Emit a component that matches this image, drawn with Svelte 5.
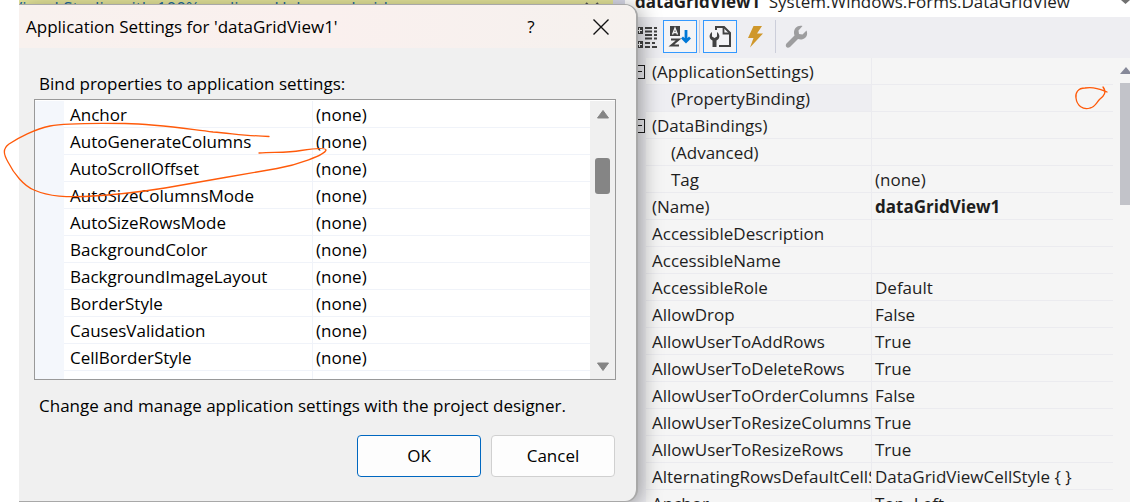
<script>
    let selected = "(PropertyBinding)";

    const bindings = [
        "Anchor",
        "AutoGenerateColumns",
        "AutoScrollOffset",
        "AutoSizeColumnsMode",
        "AutoSizeRowsMode",
        "BackgroundColor",
        "BackgroundImageLayout",
        "BorderStyle",
        "CausesValidation",
        "CellBorderStyle",
        "ClipboardCopyMode"
    ];

    const properties = [
        { name: "(ApplicationSettings)", value: "", group: true },
        { name: "(PropertyBinding)", value: "", child: true },
        { name: "(DataBindings)", value: "", group: true },
        { name: "(Advanced)", value: "", child: true },
        { name: "Tag", value: "(none)", child: true },
        { name: "(Name)", value: "dataGridView1", bold: true },
        { name: "AccessibleDescription", value: "" },
        { name: "AccessibleName", value: "" },
        { name: "AccessibleRole", value: "Default" },
        { name: "AllowDrop", value: "False" },
        { name: "AllowUserToAddRows", value: "True" },
        { name: "AllowUserToDeleteRows", value: "True" },
        { name: "AllowUserToOrderColumns", value: "False" },
        { name: "AllowUserToResizeColumns", value: "True" },
        { name: "AllowUserToResizeRows", value: "True" },
        { name: "AlternatingRowsDefaultCellStyle", value: "DataGridViewCellStyle { }" },
        { name: "Anchor", value: "Top, Left" }
    ];
</script>

<div class="screen">
    <div class="editor">
        <div class="infobar">
            <a class="restart" href="#restart">Restart Visual Studio with 100% scaling</a>
            <a class="help" href="#help">Help me decide</a>
            <button class="dismiss" aria-label="Dismiss">
                <svg width="14" height="14" viewBox="0 0 14 14"><path d="M1 1l12 12M13 1L1 13" stroke="#555" stroke-width="2" /></svg>
            </button>
        </div>
    </div>

    <section class="pane">
        <button class="object" aria-haspopup="listbox">
            <span><b>dataGridView1</b>&ensp;System.Windows.Forms.DataGridView</span>
            <svg width="9" height="14" viewBox="0 0 9 14"><path d="M0 0h9L4.500 4z" fill="#717171" /></svg>
        </button>

        <div class="toolbar">
            <button class="tool first" aria-label="Categorized">
                <svg width="24" height="24" viewBox="0 0 24 24" fill="none" stroke="#424242">
                    <path d="M3 2h7v7H3zM3 16h7v7H3z" fill="#424242" stroke="none" />
                    <path d="M4 5.500h5M6.500 3v5M4 19.500h5M6.500 17v5" stroke="#fff" />
                    <path d="M12 3h7M21 3h3M12 6.500h7M21 6.500h3M12 10h7M21 10h3M12 13.500h7M21 13.500h3M12 18h5M19 18h3M12 22h5M19 22h5" stroke-width="2" />
                </svg>
            </button>
            <button class="tool on" aria-label="Alphabetical">
                <svg width="24" height="24" viewBox="0 0 24 24" fill="none">
                    <path d="M2 1h10v10H2z" fill="#424242" />
                    <path d="M4.500 9.500L7 3l2.500 6.500M5.500 7.500h3" stroke="#f4f4f4" stroke-width="1.300" />
                    <path d="M3 14.500h7.500L3.500 20.500H11" stroke="#424242" stroke-width="2.200" />
                    <path d="M18 5v11M14 12.500l4 4 4-4" stroke="#0078d7" stroke-width="2.800" />
                </svg>
            </button>
            <span class="sep"></span>
            <button class="tool on" aria-label="Properties">
                <svg width="24" height="24" viewBox="0 0 24 24" fill="none">
                    <path d="M8 5V2h8l6 6v13H11" stroke="#424242" stroke-width="2" />
                    <path d="M15.500 2v6.500H22" stroke="#424242" stroke-width="1.800" />
                    <path d="M4 7v4.500l2.500 1.500L9 11.500V7c3.500 2.500 3 7-.5 8.500V22h-4v-6.500C1 14 .5 9.500 4 7z" fill="#424242" />
                </svg>
            </button>
            <button class="tool" aria-label="Events">
                <svg width="24" height="24" viewBox="0 0 24 24"><path d="M9.500 1H18l-5 7.500h6L6 22.500l3.500-9.500H4z" fill="#cf972b" /></svg>
            </button>
            <span class="sep"></span>
            <button class="tool" aria-label="Property Pages" disabled>
                <svg width="24" height="24" viewBox="0 0 24 24">
                    <path d="M18.500 1l-4 4.500.5 3.500 3.500.5 4-4c2.500 6-3 10.500-8.500 8.500l-8 8c-3 2-5.500-.5-3.500-3.500l8-8C8.500 5 12.500-.500 18.500 1z" fill="#9d9d9f" />
                </svg>
            </button>
        </div>

        <div class="grid">
            <table class="props">
                <colgroup><col class="gutter" /><col class="key" /><col /></colgroup>
                <tbody>
                    {#each properties as p}
                        <tr class:selected={p.name === selected}>
                            <td class="mark">
                                {#if p.group}
                                    <button class="expander" aria-label="Collapse"></button>
                                {/if}
                            </td>
                            <th scope="row" class:child={p.child}>{p.name}</th>
                            <td class:bold={p.bold}>{p.value}</td>
                        </tr>
                    {/each}
                </tbody>
            </table>
            <div class="pane-scroll">
                <svg width="12" height="8" viewBox="0 0 12 8"><path d="M6 0l6 7H0z" fill="#868999" /></svg>
                <div class="pane-thumb"></div>
            </div>
        </div>
    </section>

    <div class="dialog" role="dialog" aria-labelledby="dialog-title">
        <header>
            <h1 id="dialog-title">Application Settings for 'dataGridView1'</h1>
            <button class="caption" aria-label="Help"><span>?</span></button>
            <button class="caption" aria-label="Close">
                <svg width="16" height="16" viewBox="0 0 16 16"><path d="M.5.5l15 15M15.500.5l-15 15" stroke="#111" stroke-width="1.400" /></svg>
            </button>
        </header>

        <div class="content">
            <p id="list-label">Bind properties to application settings:</p>
            <div class="list">
                <div class="margin"></div>
                <table aria-labelledby="list-label">
                    <colgroup><col class="name" /><col /></colgroup>
                    <tbody>
                        {#each bindings as name}
                            <tr>
                                <th scope="row">{name}</th>
                                <td>(none)</td>
                            </tr>
                        {/each}
                    </tbody>
                </table>
                <div class="scrollbar">
                    <svg width="12" height="9" viewBox="0 0 12 9"><path d="M6 0.500L11.500 8H.5z" fill="#858585" stroke="#858585" stroke-linejoin="round" /></svg>
                    <div class="thumb"></div>
                    <svg width="12" height="9" viewBox="0 0 12 9"><path d="M6 8.500L.5 1h11z" fill="#858585" stroke="#858585" stroke-linejoin="round" /></svg>
                </div>
            </div>
            <p>Change and manage application settings with the project designer.</p>
            <div class="actions">
                <button class="default">OK</button>
                <button>Cancel</button>
            </div>
        </div>
    </div>
</div>

<!-- pen marks over the windows -->
<svg class="ink" width="1130" height="220" viewBox="0 0 1130 220">
    <path d="M269 136.500C250 136 236 134 213 132C180 128 155 124 125 123.500C95 123 65 123 50 126C35 129 18 138 9 144C2 149 4 155 8 162C14 174 24 186 34 190C50 197 68 197 85 196.500C115 195 140 192 165 188L225 177.500L277 168.500C297 165 325 155 326 150C325 147 311 149 301 150.500C287 153 275 152 259 153" />
    <path d="M1107 92C1102 90 1095 86 1085 88C1078 88 1075 93 1076 98C1077 106 1083 110 1090 108C1095 107 1096 103 1100 99C1104 96 1107 92 1103 87" />
</svg>

<style>
    :global(body) {
        background: #fff;
        overflow: hidden;
    }

    .screen {
        position: relative;
        display: grid;
        grid-template-columns: 606px 1fr;
        height: 100vh;
        margin-left: 19px;
        overflow: hidden;
        background: #d9dae8;
        color: #1e1e1e;
        font-family: "Open Sans", "Noto Sans", sans-serif;
        font-size: 17px;
        line-height: 24px;
    }

    button {
        padding: 0;
        border: 0;
        background: none;
        color: inherit;
        font: inherit;
    }

    svg {
        display: block;
        flex: none;
    }

    p, h1 {
        margin: 0;
        font-size: 17px;
        font-weight: 400;
    }

    table {
        border-spacing: 0;
        table-layout: fixed;
    }

    td, th {
        box-sizing: border-box;
        height: 27px;
        padding: 2px 0 0;
        overflow: hidden;
        font-weight: 400;
        text-align: left;
        white-space: nowrap;
    }

    /* editor behind the dialog */
    .editor {
        min-width: 0;
    }

    .infobar {
        display: flex;
        align-items: flex-start;
        height: 28px;
        margin-right: 12px;
        overflow: hidden;
        background: #e6e69c;
    }

    .infobar a {
        color: #1c6a9c;
        line-height: 16px;
        text-decoration: none;
        white-space: nowrap;
    }

    .restart {
        margin-left: -68px;
    }

    .help {
        margin-left: 16px;
    }

    .dismiss {
        margin: 2px 14px 0 auto;
    }

    /* properties window */
    .pane {
        display: flex;
        flex-direction: column;
        min-width: 0;
        background: #eeeef2;
    }

    .object {
        display: flex;
        align-items: flex-end;
        justify-content: space-between;
        flex: none;
        height: 17px;
        padding: 0 0 3px 10px;
        overflow: hidden;
        background: #fff;
        white-space: nowrap;
    }

    .toolbar {
        display: flex;
        align-items: center;
        flex: none;
        height: 41px;
        padding: 0 0 2px 8px;
        box-sizing: border-box;
    }

    .tool {
        display: grid;
        place-items: center;
        box-sizing: border-box;
        width: 34px;
        height: 33px;
        margin-right: 2px;
    }

    .tool.first {
        justify-items: start;
        width: 28px;
    }

    .tool.on {
        border: 1px solid #3399ff;
        background: #f4f4f6;
    }

    .sep {
        width: 1px;
        height: 33px;
        margin-right: 3px;
        background: #ccceda;
    }

    .grid {
        display: flex;
        flex: 1;
        min-height: 0;
        overflow: hidden;
        background: #f5f5f5;
    }

    .props {
        flex: 1;
        align-self: flex-start;
        width: 100%;
    }

    .gutter {
        width: 21px;
    }

    .key {
        width: 226px;
    }

    .props .mark {
        padding: 0 0 0 6px;
        border: 0;
        background: #eeeef2;
    }

    .props th, .props td {
        border-bottom: 1px solid #ebebef;
        padding-left: 3px;
    }

    .props th {
        border-right: 1px solid #ebebef;
        padding-left: 6px;
    }

    .props th.child {
        padding-left: 25px;
    }

    .props .selected th {
        background: #eeeef2;
    }

    .bold {
        font-weight: 700;
    }

    .expander {
        display: grid;
        place-items: center;
        box-sizing: border-box;
        width: 14px;
        height: 14px;
        border: 1px solid #1e1e1e;
    }

    .expander::before {
        content: "";
        width: 8px;
        height: 1px;
        background: #1e1e1e;
    }

    .pane-scroll {
        flex: none;
        box-sizing: border-box;
        width: 17px;
        padding: 9px 0 0 7px;
    }

    .pane-thumb {
        height: 122px;
        margin-top: 8px;
        background: #c2c3c9;
    }

    /* settings dialog */
    .dialog {
        position: absolute;
        top: 4px;
        left: 0;
        box-sizing: border-box;
        width: 619px;
        border: solid #a8a8a8;
        border-width: 1px 2px 1px 0;
        border-radius: 0 13px 13px 0;
        overflow: hidden;
        background: #f0f0f0;
        box-shadow: 2px 4px 22px rgba(0, 0, 0, 0.4);
        color: #000;
    }

    header {
        display: flex;
        align-items: center;
        height: 43px;
        padding-left: 7px;
        background: linear-gradient(90deg, #f8f1ee, #faf0ee 50%, #f5f1ee);
    }

    h1 {
        flex: 1;
    }

    .caption {
        display: grid;
        place-items: center;
        width: 70px;
        height: 43px;
    }

    .content {
        padding: 24px 21px 24px 20px;
    }

    .list {
        display: flex;
        box-sizing: border-box;
        height: 281px;
        margin: 3px -1px 14px -5px;
        padding-top: 1px;
        border: 1px solid #999;
        overflow: hidden;
        background: #fff;
    }

    .margin {
        flex: none;
        width: 29px;
        background: #f4f7fc;
    }

    .list table {
        flex: 1;
        align-self: flex-start;
        width: 100%;
    }

    .name {
        width: 249px;
    }

    .list th, .list td {
        border-bottom: 1px solid #f0f3f9;
        padding-left: 3px;
    }

    .list th {
        border-right: 1px solid #f0f3f9;
        padding-left: 6px;
    }

    .scrollbar {
        display: flex;
        flex-direction: column;
        align-items: center;
        flex: none;
        box-sizing: border-box;
        width: 25px;
        padding: 9px 0 8px;
        background: #f0f0f0;
    }

    .thumb {
        width: 15px;
        height: 36px;
        margin: 39px 0 auto;
        border-radius: 3px;
        background: #858585;
    }

    .actions {
        display: flex;
        justify-content: flex-end;
        gap: 10px;
        margin-top: 17px;
    }

    .actions button {
        box-sizing: border-box;
        width: 124px;
        height: 42px;
        border: 1px solid #d0d0d0;
        border-radius: 4px;
        background: #fdfdfd;
    }

    .actions .default {
        border-color: #0067c0;
    }

    .ink {
        position: absolute;
        top: 0;
        left: 0;
        fill: none;
        stroke: #ff5a0a;
        stroke-width: 1.3px;
        stroke-linecap: round;
        pointer-events: none;
    }
</style>
